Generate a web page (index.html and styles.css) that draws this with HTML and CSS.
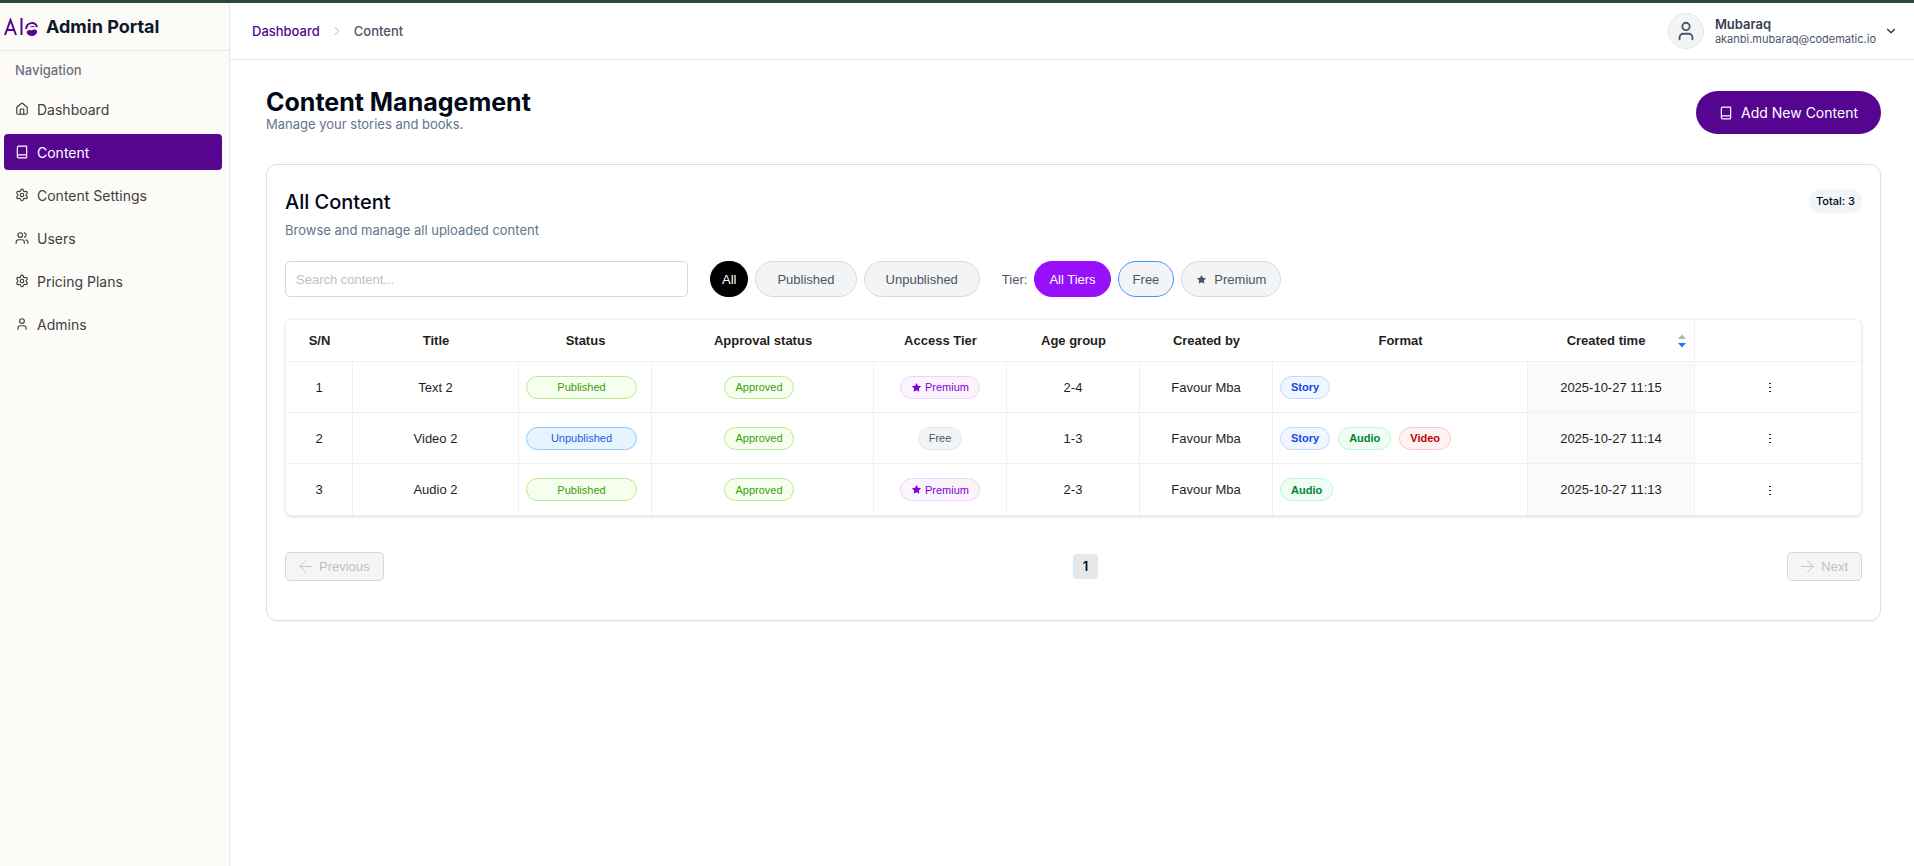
FILE: index.html
```
<!DOCTYPE html>
<html lang="en">
<head>
  <meta charset="UTF-8">
  <title>Admin Portal - Content Management</title>
  <meta name="viewport" content="width=device-width, initial-scale=1">
  <link rel="stylesheet" href="styles.css">
</head>
<body>

<!-- Icon set -->
<svg class="sprite" aria-hidden="true">
  <symbol id="i-home" viewBox="0 0 24 24"><path d="M15 21v-8a1 1 0 0 0-1-1h-4a1 1 0 0 0-1 1v8"/><path d="M3 10a2 2 0 0 1 .7-1.5l7-6a2 2 0 0 1 2.6 0l7 6A2 2 0 0 1 21 10v9a2 2 0 0 1-2 2H5a2 2 0 0 1-2-2z"/></symbol>
  <symbol id="i-book" viewBox="0 0 24 24"><path d="M4 19.5v-15A2.5 2.5 0 0 1 6.500 2H19a1 1 0 0 1 1 1v18a1 1 0 0 1-1 1H6.500a1 1 0 0 1 0-5H20"/></symbol>
  <symbol id="i-settings" viewBox="0 0 24 24"><path d="M9.700 4.100a2.340 2.340 0 0 1 4.660 0 2.340 2.340 0 0 0 3.320 1.920 2.340 2.340 0 0 1 2.330 4.030 2.340 2.340 0 0 0 0 3.830 2.340 2.340 0 0 1-2.330 4.030 2.340 2.340 0 0 0-3.320 1.920 2.340 2.340 0 0 1-4.660 0 2.340 2.340 0 0 0-3.320-1.920 2.340 2.340 0 0 1-2.330-4.030 2.340 2.340 0 0 0 0-3.830 2.340 2.340 0 0 1 2.330-4.030 2.340 2.340 0 0 0 3.320-1.920"/><circle cx="12" cy="12" r="3"/></symbol>
  <symbol id="i-users" viewBox="0 0 24 24"><path d="M16 21v-2a4 4 0 0 0-4-4H6a4 4 0 0 0-4 4v2"/><circle cx="9" cy="7" r="4"/><path d="M16 3.130a4 4 0 0 1 0 7.750M22 21v-2a4 4 0 0 0-3-3.870"/></symbol>
  <symbol id="i-user" viewBox="0 0 24 24"><circle cx="12" cy="7" r="4"/><path d="M19 21v-2a4 4 0 0 0-4-4H9a4 4 0 0 0-4 4v2"/></symbol>
  <symbol id="i-star" viewBox="0 0 24 24"><path fill="currentColor" d="M12 2l3.100 6.300 6.900 1-5 4.900 1.200 6.900L12 17.800l-6.200 3.300L7 14.200 2 9.300l6.900-1z"/></symbol>
</svg>

<div class="layout">
  <aside class="sidebar">
    <div class="brand">
      <svg class="logo" viewBox="0 0 34 18" aria-hidden="true">
        <path d="M1 17L6.500 2L12 17M3 12h7"/>
        <path d="M17.500 0v17"/>
        <path d="M22 11c1-7 9-8 11-2"/>
        <path class="fill" d="M22.500 14.500c1-2.500 3-3 5-2 2-1.500 5-1 5.500.5.500 2.500-2 5-5 5-2.500 0-4.500-1-5.500-3.500z"/>
        <path class="fill" d="M25.500 9.500c1.500-2 4.500-2 6 0-2-.6-4-.6-6 0z"/>
      </svg>
      <span>Admin Portal</span>
    </div>
    <h2 class="nav-title">Navigation</h2>
    <nav class="nav">
      <a href="#"><svg class="icon"><use href="#i-home"/></svg>Dashboard</a>
      <a href="#" class="active" aria-current="page"><svg class="icon"><use href="#i-book"/></svg>Content</a>
      <a href="#"><svg class="icon"><use href="#i-settings"/></svg>Content Settings</a>
      <a href="#"><svg class="icon"><use href="#i-users"/></svg>Users</a>
      <a href="#"><svg class="icon"><use href="#i-settings"/></svg>Pricing Plans</a>
      <a href="#"><svg class="icon"><use href="#i-user"/></svg>Admins</a>
    </nav>
  </aside>

  <div class="page">
    <header class="topbar">
      <nav class="breadcrumb" aria-label="Breadcrumb">
        <a href="#">Dashboard</a>
        <svg class="icon" viewBox="0 0 24 24"><path d="m9 18 6-6-6-6"/></svg>
        <span>Content</span>
      </nav>
      <button class="account">
        <span class="avatar"><svg class="icon"><use href="#i-user"/></svg></span>
        <span class="account-text">
          <strong>Mubaraq</strong>
          <span>akanbi.mubaraq@codematic.io</span>
        </span>
        <svg class="icon" viewBox="0 0 24 24"><path d="m6 9 6 6 6-6"/></svg>
      </button>
    </header>

    <main class="main">
      <div class="page-head">
        <div>
          <h1>Content Management</h1>
          <p>Manage your stories and books.</p>
        </div>
        <button class="add-btn"><svg class="icon"><use href="#i-book"/></svg>Add New Content</button>
      </div>

      <section class="card">
        <div class="card-head">
          <div>
            <h2>All Content</h2>
            <p>Browse and manage all uploaded content</p>
          </div>
          <span class="total">Total: 3</span>
        </div>

        <div class="filters">
          <input type="text" class="search" placeholder="Search content..." aria-label="Search content">
          <div class="pills">
            <button class="pill pill-all">All</button>
            <button class="pill pill-wide">Published</button>
            <button class="pill pill-wide">Unpublished</button>
          </div>
          <div class="pills">
            <span class="tier-label">Tier:</span>
            <button class="pill pill-tiers">All Tiers</button>
            <button class="pill pill-free">Free</button>
            <button class="pill"><svg class="star"><use href="#i-star"/></svg>Premium</button>
          </div>
        </div>

        <table class="table">
          <colgroup>
            <col class="c-sn"><col class="c-title"><col class="c-std"><col class="c-approval"><col class="c-std"><col class="c-std"><col class="c-std"><col class="c-format"><col class="c-time"><col class="c-title">
          </colgroup>
          <thead>
            <tr>
              <th scope="col">S/N</th>
              <th scope="col">Title</th>
              <th scope="col">Status</th>
              <th scope="col">Approval status</th>
              <th scope="col">Access Tier</th>
              <th scope="col">Age group</th>
              <th scope="col">Created by</th>
              <th scope="col">Format</th>
              <th scope="col" class="sorted" aria-sort="descending">
                <div class="sorter">
                  <span>Created time</span>
                  <svg viewBox="0 0 10 14" aria-hidden="true"><path class="up" d="M5 0.500L9 5H1z"/><path class="down" d="M1 9h8L5 13.500z"/></svg>
                </div>
              </th>
              <td></td>
            </tr>
          </thead>
          <tbody>
            <tr>
              <td>1</td>
              <td>Text 2</td>
              <td><span class="tag tag-block published">Published</span></td>
              <td><span class="tag tag-approval published">Approved</span></td>
              <td><span class="tag premium"><svg class="star"><use href="#i-star"/></svg>Premium</span></td>
              <td>2-4</td>
              <td>Favour Mba</td>
              <td><div class="formats"><span class="tag story">Story</span></div></td>
              <td class="time">2025-10-27 11:15</td>
              <td><button class="more" aria-label="Actions for Text 2"><svg viewBox="0 0 4 12"><path d="M1 1h2v1H1zM1 5h2v1H1zM1 9h2v1H1z"/></svg></button></td>
            </tr>
            <tr>
              <td>2</td>
              <td>Video 2</td>
              <td><span class="tag tag-block unpublished">Unpublished</span></td>
              <td><span class="tag tag-approval published">Approved</span></td>
              <td><span class="tag free">Free</span></td>
              <td>1-3</td>
              <td>Favour Mba</td>
              <td><div class="formats"><span class="tag story">Story</span><span class="tag audio">Audio</span><span class="tag video">Video</span></div></td>
              <td class="time">2025-10-27 11:14</td>
              <td><button class="more" aria-label="Actions for Video 2"><svg viewBox="0 0 4 12"><path d="M1 1h2v1H1zM1 5h2v1H1zM1 9h2v1H1z"/></svg></button></td>
            </tr>
            <tr>
              <td>3</td>
              <td>Audio 2</td>
              <td><span class="tag tag-block published">Published</span></td>
              <td><span class="tag tag-approval published">Approved</span></td>
              <td><span class="tag premium"><svg class="star"><use href="#i-star"/></svg>Premium</span></td>
              <td>2-3</td>
              <td>Favour Mba</td>
              <td><div class="formats"><span class="tag audio">Audio</span></div></td>
              <td class="time">2025-10-27 11:13</td>
              <td><button class="more" aria-label="Actions for Audio 2"><svg viewBox="0 0 4 12"><path d="M1 1h2v1H1zM1 5h2v1H1zM1 9h2v1H1z"/></svg></button></td>
            </tr>
          </tbody>
        </table>

        <div class="pager">
          <button class="pager-btn" disabled><svg class="icon" viewBox="0 0 14 14"><path d="M13 7H1M7 1L1 7l6 6"/></svg>Previous</button>
          <span class="page-no">1</span>
          <button class="pager-btn" disabled><svg class="icon" viewBox="0 0 14 14"><path d="M1 7h12M7 1l6 6-6 6"/></svg>Next</button>
        </div>
      </section>
    </main>
  </div>
</div>

</body>
</html>
```
FILE: styles.css
```
* { box-sizing: border-box; }
body { margin: 0; font-family: Inter, "Liberation Sans", sans-serif; font-size: 13px; color: #020817; background: #fff; border-top: 3px solid #2c453f; }
h1, h2, p { margin: 0; }
a { text-decoration: none; color: inherit; }
button { font: inherit; color: inherit; border: 0; background: none; padding: 0; cursor: pointer; }
svg { fill: none; flex-shrink: 0; }
.sprite { position: absolute; width: 0; height: 0; }
.icon { width: 14px; height: 14px; stroke: currentColor; stroke-width: 2; stroke-linecap: round; stroke-linejoin: round; }
.star { width: 11px; height: 11px; }

.layout { display: flex; min-height: calc(100vh - 3px); }

/* Sidebar */
.sidebar { width: 230px; flex-shrink: 0; background: #fdfbf7; border-right: 1px solid #e5e7eb; }
.brand { display: flex; align-items: center; gap: 8px; height: 48px; padding: 0 4px; border-bottom: 1px solid #e8e8eb; font-size: 18px; font-weight: 700; color: #0f172a; }
.logo { width: 34px; height: 18px; stroke: #560591; stroke-width: 2; }
.logo .fill { fill: #560591; stroke: none; }
.nav-title { padding: 11px 15px 0; font-size: 13px; line-height: 16px; font-weight: 500; color: #6b7280; }
.nav { display: flex; flex-direction: column; gap: 7px; padding: 13px 7px 0 4px; }
.nav a { display: flex; align-items: center; gap: 8px; height: 36px; padding: 0 11px; border-radius: 4px; font-size: 14px; color: #404040; }
.nav .active { background: #560591; color: #fff; }

/* Top bar */
.page { flex: 1; min-width: 0; }
.topbar { display: flex; align-items: center; justify-content: space-between; height: 57px; padding: 0 16px 0 22px; border-bottom: 1px solid #e5e7eb; }
.breadcrumb { display: flex; align-items: center; gap: 10px; font-weight: 500; line-height: 18px; color: #475569; }
.breadcrumb a { color: #560591; }
.breadcrumb .icon { color: #cbd5e1; }
.account { display: flex; align-items: center; gap: 8px; text-align: left; color: #1f2937; }
.avatar { display: grid; place-items: center; width: 36px; height: 36px; margin-right: 3px; border: 1px solid #e5e7eb; border-radius: 50%; background: #f3f4f6; color: #475569; }
.avatar .icon { width: 22px; height: 22px; }
.account-text { display: flex; flex-direction: column; font-size: 11px; line-height: 14px; color: #475569; }
.account-text strong { font-size: 13px; line-height: 16px; font-weight: 600; color: #374151; }

/* Page heading */
.main { padding: 31px 33px 32px 36px; }
.page-head { display: flex; align-items: flex-start; justify-content: space-between; }
.page-head h1 { font-size: 25px; line-height: 23px; font-weight: 700; }
.page-head p { font-size: 13px; line-height: 20px; color: #64748b; }
.add-btn { display: flex; align-items: center; gap: 8px; height: 43px; padding: 0 23px; border-radius: 22px; background: #560591; color: #fff; font-size: 14px; }

/* Card */
.card { margin-top: 30px; padding: 22px 18px 39px; border: 1px solid #dbdfea; border-radius: 11px; box-shadow: 0 1px 2px rgba(0, 0, 0, .05); font-family: "Liberation Sans", Arial, sans-serif; }
.card-head { display: flex; align-items: flex-start; justify-content: space-between; font-family: Inter, sans-serif; }
.card-head h2 { font-size: 20px; line-height: 30px; font-weight: 500; }
.card-head p { margin-top: 4px; line-height: 18px; color: #64748b; }
.total { padding: 0 7px; margin-top: 2px; border-radius: 12px; background: #f1f5f9; font-size: 11px; line-height: 24px; font-weight: 500; }

.filters { display: flex; align-items: center; gap: 22px; margin-top: 22px; }
.search { width: 403px; height: 36px; padding: 0 10px; border: 1px solid #d9d9d9; border-radius: 5px; font: 13px "Liberation Sans", Arial, sans-serif; }
.search::placeholder { color: #bfbfbf; }
.pills { display: flex; align-items: center; gap: 7px; }
.tier-label { color: #4b5563; }
.pill { display: flex; align-items: center; gap: 7px; height: 36px; padding: 0 14px; border: 1px solid #d9d9d9; border-radius: 18px; background: #f3f4f6; color: #4b5563; }
.pill-wide { padding: 0 21px; }
.pill-all { padding: 0 11px; border-color: #000; background: #000; color: #fff; }
.pill-tiers { border-color: #9810fa; background: #9810fa; color: #fff; }
.pill-free { border-color: #4096ff; }

/* Table */
.table { width: 100%; margin-top: 22px; table-layout: fixed; border-collapse: separate; border-spacing: 0; border: 1px solid #f0f0f0; border-radius: 7px; box-shadow: 0 1px 3px rgba(0, 0, 0, .15); text-align: center; color: #1f1f1f; }
.c-sn { width: 67px; }
.c-title { width: 166px; }
.c-std { width: 133px; }
.c-approval { width: 222px; }
.c-format { width: 255px; }
.c-time { width: 167px; }
.table th, .table td { height: 51px; padding: 0 7px; border-right: 1px solid #f0f0f0; border-bottom: 1px solid #f0f0f0; }
.table thead th, .table thead td { height: 42px; font-weight: 700; border-right: 0; }
.table thead .sorted { border-right: 1px solid #f0f0f0; }
.table tr > :last-child { border-right: 0; }
.table tbody tr:last-child td { border-bottom: 0; }
.table .time { background: #fafafa; }
.sorter { display: flex; align-items: center; }
.sorter span { flex: 1; }
.sorter svg { width: 10px; height: 14px; }
.up { fill: #b5b5b5; }
.down { fill: #1677ff; }

.tag { display: inline-flex; align-items: center; justify-content: center; gap: 3px; height: 23px; padding: 0 10px; border: 1px solid; border-radius: 12px; font-size: 11px; vertical-align: middle; }
.tag-block { display: flex; margin-right: 7px; }
.tag-approval { margin-right: 7px; }
.published { background: #f6ffed; border-color: #b7eb8f; color: #389e0d; }
.unpublished { background: #e6f4ff; border-color: #91caff; color: #1d5fdb; }
.premium { background: linear-gradient(90deg, #faf5ff, #fdf2f8); border-color: #e9d5ff; color: #8200db; }
.free { background: #f3f4f6; border-color: #e5e7eb; color: #4b5563; }
.formats { display: flex; gap: 8px; font-weight: 700; }
.story { background: #eff6ff; border-color: #bedbff; color: #1447e6; }
.audio { background: #f0fdf4; border-color: #b9f8cf; color: #008236; }
.video { background: #fef2f2; border-color: #ffc9c9; color: #c10007; }
.more { margin-right: 16px; vertical-align: middle; }
.more svg { display: block; width: 4px; height: 12px; fill: #1f1f1f; }

/* Pagination */
.pager { display: flex; align-items: center; justify-content: space-between; margin-top: 36px; }
.pager-btn { display: flex; align-items: center; gap: 7px; height: 29px; padding: 0 13px; border: 1px solid #d9d9d9; border-radius: 5px; background: #f5f5f5; color: #bfbfbf; cursor: not-allowed; }
.pager-btn .icon { width: 13px; height: 13px; stroke-width: 1; }
.page-no { padding: 0 10px; border-radius: 4px; background: #e5e7eb; font-family: Inter, sans-serif; line-height: 25px; font-weight: 600; }
```
